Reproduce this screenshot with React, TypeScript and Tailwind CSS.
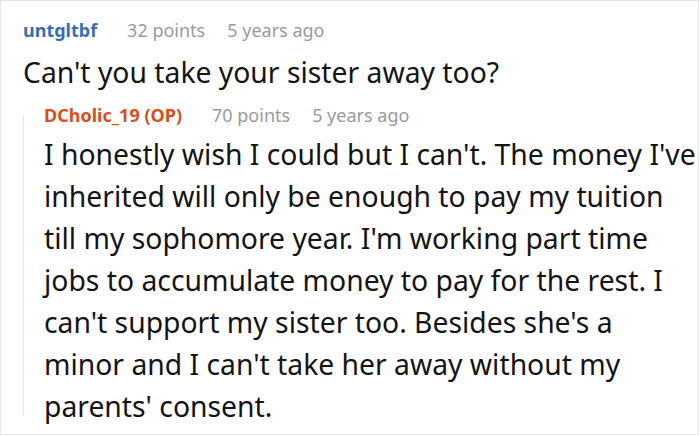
export default function App() {
  return (
    <div className="w-[700px] h-[436px] bg-white overflow-hidden" style={{ fontFamily: '"Noto Sans", "Open Sans", sans-serif' }}>
      <div className="w-[699px] h-[435px] border border-[#e3e3e3] pl-[22px] pt-[17px]">
        <div className="flex items-baseline text-[18px] leading-[24px]">
          <span className="font-bold text-[#3a6db5] mr-[30px]">untgltbf</span>
          <span className="text-[#9a9a9a] mr-[22px]">32 points</span>
          <span className="text-[#9a9a9a]">5 years ago</span>
        </div>
        <p className="text-[28.3px] leading-[42px] text-[#141414] mt-[9px] whitespace-nowrap">Can't you take your sister away too?</p>
        <div className="flex mt-[10px]">
          <div className="w-px bg-[#e4e4e4] mt-[12px] mb-[11px] shrink-0" />
          <div className="pl-[20px]">
            <div className="flex items-baseline text-[18px] leading-[24px]">
              <span className="font-bold text-[#d5501d] mr-[30px]">DCholic_19 (OP)</span>
              <span className="text-[#9a9a9a] mr-[22px]">70 points</span>
              <span className="text-[#9a9a9a]">5 years ago</span>
            </div>
            <p className="text-[28.3px] leading-[42px] text-[#141414] mt-[6px] w-[652px]">
              I honestly wish I could but I can't. The money I've inherited will only be enough to pay my tuition till my sophomore year. I'm working part time jobs to accumulate money to pay for the rest. I can't support my sister too. Besides she's a minor and I can't take her away without my parents' consent.
            </p>
          </div>
        </div>
      </div>
    </div>
  );
}
